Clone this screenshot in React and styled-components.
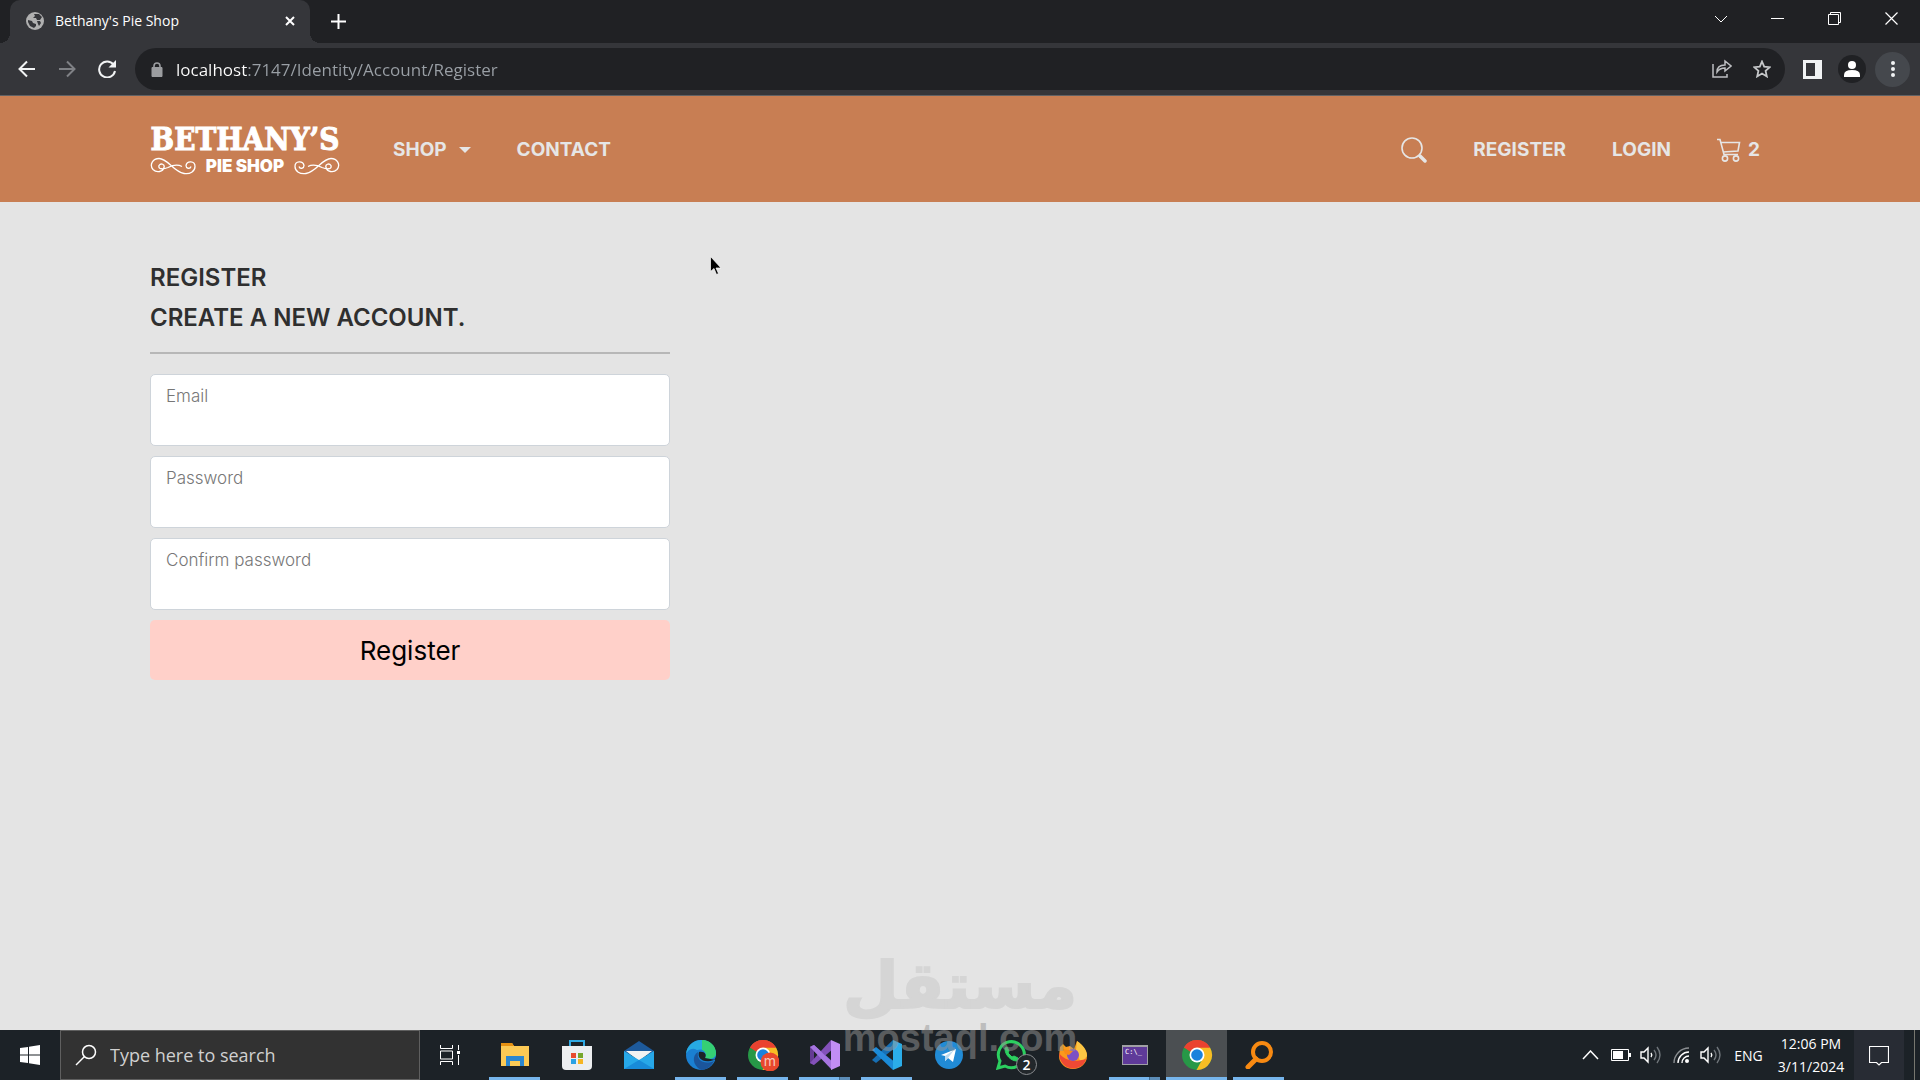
import React from 'react';
import styled, { createGlobalStyle } from 'styled-components';

const ui = `"Open Sans", "Noto Sans", sans-serif`;
const brand = `Inter, "Liberation Sans", sans-serif`;

const GlobalStyle = createGlobalStyle`
  *, *::before, *::after { box-sizing: border-box; }
  body { margin: 0; background: #e4e4e4; }
  button, input { font: inherit; color: inherit; border: 0; padding: 0; margin: 0; background: none; outline: 0; }
  button { display: flex; align-items: center; justify-content: center; cursor: default; }
  svg { display: block; flex: none; }
`;

const Screen = styled.div`
  display: flex;
  flex-direction: column;
  min-height: 100vh;
  position: relative;
  overflow: hidden;
  font-family: ${ui};
`;

/* Browser */
const TabStrip = styled.div`
  display: flex;
  align-items: stretch;
  height: 43px;
  padding-left: 10px;
  background: #202124;
  color: #fff;
`;
const Tab = styled.div`
  position: relative;
  display: flex;
  align-items: center;
  gap: 11px;
  width: 300px;
  padding: 0 10px 2px 16px;
  border-radius: 10px 10px 0 0;
  background: #35363a;
  font-size: 14px;
  &::before, &::after {
    content: "";
    position: absolute;
    bottom: 0;
    width: 10px;
    height: 10px;
  }
  &::before { right: 100%; background: radial-gradient(circle at 0 0, transparent 10px, #35363a 10px); }
  &::after { left: 100%; background: radial-gradient(circle at 100% 0, transparent 10px, #35363a 10px); }
`;
const TabTitle = styled.span`flex: 1; line-height: 20px;`;
const TabButton = styled.button`width: 20px; height: 20px;`;
const NewTab = styled.button`width: 36px; margin: 0 auto 0 10px; padding-bottom: 1px;`;
const WindowButton = styled.button`width: 57px; padding-bottom: 6px;`;

const Toolbar = styled.div`
  display: flex;
  align-items: center;
  height: 53px;
  padding: 0 10px 0 7px;
  background: #35363a;
  border-bottom: 1px solid #606164;
  color: #f1f3f4;
`;
const ToolButton = styled.button`width: 40px; height: 40px;`;
const MenuButton = styled.button`width: 35px; height: 35px; border-radius: 50%; background: #45484d; margin-left: 3px;`;
const AddressBar = styled.div`
  display: flex;
  align-items: center;
  flex: 1;
  height: 42px;
  margin: 0 7px 0 8px;
  padding: 0 3px 0 15px;
  gap: 12px;
  border-radius: 21px;
  background: #202124;
`;
const Address = styled.input`
  flex: 1;
  min-width: 0;
  height: 28px;
  font-size: 17px;
  color: #9aa0a6;
  background: linear-gradient(90deg, #fff ${p => p.$host}px, #9aa0a6 ${p => p.$host}px);
  background-clip: text;
  -webkit-text-fill-color: transparent;
`;
const AddressIcons = styled.div`display: flex;`;

/* Site */
const Nav = styled.nav`
  background: #c87e53;
  color: #e6e6e6;
  font-family: ${brand};
  font-size: 19px;
  font-weight: 700;
  line-height: 30px;
`;
const Container = styled.div`
  max-width: 1650px;
  margin: 0 auto;
  padding: 0 15px;
`;
const NavRow = styled(Container)`
  display: flex;
  align-items: center;
  height: 106px;
`;
const Logo = styled.a`
  display: flex;
  flex-direction: column;
  align-items: center;
  width: 190px;
  margin-right: 30px;
  color: #fff;
  text-decoration: none;
`;
const LogoName = styled.span`
  font: bold 31px/34px "DejaVu Serif Condensed", "DejaVu Serif", serif;
  font-stretch: condensed;
  white-space: nowrap;
  -webkit-text-stroke: 1px #fff;
`;
const LogoSub = styled.span`
  display: flex;
  align-items: center;
  justify-content: space-between;
  width: 100%;
  font: 900 17px/20px ${brand};
`;
const NavLink = styled.a`
  display: flex;
  align-items: center;
  gap: ${p => p.$gap || 0}px;
  padding: 2px 23px 0;
  color: inherit;
  text-decoration: none;
`;
const NavEnd = styled.div`display: flex; margin-left: auto; margin-right: -13px;`;

const Main = styled.main`
  flex: 1;
  padding-top: 56px;
  font-family: ${brand};
  color: #2f2f2f;
`;
const FormColumn = styled.form`width: 33%; max-width: 520px; min-width: 300px;`;
const Heading = styled.h1`
  margin: 0;
  font-size: 24px;
  font-weight: 600;
  line-height: 40px;
`;
const Rule = styled.hr`
  height: 2px;
  margin: 14px 0 20px;
  border: 0;
  background: #b7b7b7;
`;
const Stack = styled.div`display: flex; flex-direction: column; gap: 10px;`;
const Field = styled.div`
  display: flex;
  flex-direction: column;
  height: 72px;
  padding: 9px 15px;
  border: 1px solid #ced4da;
  border-radius: 5px;
  background: #fff;
  label { font-size: 17px; font-weight: 300; line-height: 24px; color: #777; }
  input { flex: 1; min-height: 0; color: #2f2f2f; }
`;
const Submit = styled.button`
  height: 60px;
  border-radius: 5px;
  background: #ffd0c9;
  color: #000;
  font-size: 26px;
`;

/* Overlays */
const Cursor = styled.div`position: absolute; left: 710px; top: 256px;`;
const Watermark = styled.div`
  position: absolute;
  left: 0;
  right: 0;
  bottom: 22px;
  display: flex;
  flex-direction: column;
  align-items: center;
  color: rgba(150, 150, 150, 0.5);
  pointer-events: none;
`;
const WatermarkArabic = styled.span`
  font: bold 64px/64px "DejaVu Sans", sans-serif;
  color: #d5d5d5;
  -webkit-text-stroke: 2px #d5d5d5;
`;
const WatermarkLatin = styled.span`font: bold 38px/40px "Liberation Sans", Arial, sans-serif;`;

/* Taskbar */
const Taskbar = styled.footer`
  display: flex;
  height: 50px;
  background: #1c2227;
  color: #fff;
  font-size: 14px;
`;
const TaskButton = styled.button`width: ${p => p.$w || 60}px; height: 50px;`;
const TaskSearch = styled.label`
  display: flex;
  align-items: center;
  gap: 13px;
  width: 360px;
  padding-left: 14px;
  border: 1px solid #5f5f5f;
  background: #323232;
  input { flex: 1; min-width: 0; font-size: 18px; line-height: 26px; }
  input::placeholder { color: #d0d0d0; opacity: 1; }
`;
const Apps = styled.div`display: flex; margin-left: 4px; gap: 1px;`;
const AppButton = styled.button`
  position: relative;
  width: 61px;
  height: 50px;
  background: ${p => (p.$state === 'active' ? '#4b4f52' : 'none')};
  &::after {
    content: "";
    display: ${p => (p.$state ? 'block' : 'none')};
    position: absolute;
    bottom: 0;
    left: ${p => (p.$state === 'active' ? 0 : 5)}px;
    right: ${p => (p.$state === 'active' ? 0 : 5)}px;
    height: 3px;
    background: ${p => (p.$state === 'many' ? 'linear-gradient(90deg, #76b5ec 40px, #3f6c93 40px, #3f6c93 41px, #5c8db8 41px)' : '#76b5ec')};
  }
`;
const Badge = styled.span`
  position: absolute;
  left: 36px;
  top: 24px;
  width: 21px;
  height: 21px;
  border: 1px solid #8a8d90;
  border-radius: 50%;
  background: #22272b;
  font-size: 14px;
  font-weight: 600;
  line-height: 19px;
  text-align: center;
`;
const Tray = styled.div`display: flex; align-items: center; margin-left: auto;`;
const TrayButton = styled.button`width: ${p => p.$w}px; height: 50px;`;
const Clock = styled.time`width: 78px; margin-right: 4px; line-height: 23px; text-align: center; padding-bottom: 1px;`;
const Notice = styled.button`width: 50px; height: 50px; background: #282c34; margin-right: 10px; padding-top: 1px;`;
const DesktopEdge = styled.span`width: 6px; height: 50px; border-left: 1px solid #77776f;`;

const Svg = ({ w = 20, h = w, box, children, ...rest }) => (
  <svg width={w} height={h} viewBox={box || `0 0 ${w} ${h}`} fill="none" stroke="currentColor" aria-hidden="true" {...rest}>
    {children}
  </svg>
);

const Globe = () => (
  <Svg w={18} stroke="none">
    <circle cx="9" cy="9" r="9" fill="#b0b0b0" />
    <path d="M2 8l4 1 1 2 3 1v2l-2 2-4-2-2-4zM8 2l1 2-2 2h3l1 2h3l2-3-3-3zM11 9h3l1 2-2 3-1-2z" fill="#35363a" />
  </Svg>
);

const Flourish = ({ flip }) => (
  <Svg w={46} h={18} strokeWidth="1.3" transform={flip ? 'scale(-1 1)' : undefined}>
    <path d="M9 8.500c2-3 6-1 5 2-1 4-7 6-11 2-4-5 0-11 6-11 9 0 14 13 25 15 6 1 11-2 11-7 0-6-8-6-9-1 0 3 4 4 5 1M9 8.500c-1 4 4 4 9 2 6-3 10-3 14-1" />
  </Svg>
);

const Speaker = () => (
  <Svg w={21} h={18} strokeWidth="1.400">
    <path d="M1 6h3l4-4v14l-4-4H1z" />
    <path d="M11 7q1.500 2 0 4" />
    <path d="M14 4q4 5 0 10M17 1q6 8 0 16" stroke="#70767b" />
  </Svg>
);

const ChromeMark = ({ badge }) => (
  <Svg w={32} stroke="none">
    <circle cx="16" cy="16" r="15" fill="#279847" />
    <path d="M16 16L3 8.500A15 15 0 0 1 29 8.500z" fill="#ea4230" />
    <path d="M16 8.500h13A15 15 0 0 1 15.500 31L22 19z" fill="#f8bd24" />
    <path d="M3 8.500L10 20l6-6z" fill="#279847" />
    <path d="M3 8.500A15 15 0 0 1 29 8.500H16l-7 4z" fill="#ea4230" />
    <circle cx="16" cy="16" r="7.500" fill="#fff" />
    <circle cx="16" cy="16" r="5.800" fill="#1a82dc" />
    {badge && <circle cx="23" cy="23" r="9.500" fill="#e8482d" />}
    {badge && <text x="23" y="27" fontSize="14" fontFamily="Inter" fill="#f7c9b8" textAnchor="middle">m</text>}
  </Svg>
);

const icons = {
  folder: (
    <Svg w={30} h={26} stroke="none">
      <path d="M1 1h11l2 3h15v20H1z" fill="#fcca55" /><path d="M1 1h11l2 3H1z" fill="#e69112" />
      <path d="M6 14h18v10h-4v-5h-10v5H6z" fill="#2b86cf" />
    </Svg>
  ),
  store: (
    <Svg w={30} h={30} stroke="none">
      <path d="M8 7V1h14v6" stroke="#2fa9e3" strokeWidth="2" /><path d="M0 6h30v20q0 4-4 4H4q-4 0-4-4z" fill="#eceef0" />
      <path d="M9 13h5v5H9z" fill="#e84a2e" /><path d="M16 13h5v5h-5z" fill="#75a62b" /><path d="M9 19h5v5H9z" fill="#2aa2e4" /><path d="M16 19h5v5h-5z" fill="#f6b522" />
    </Svg>
  ),
  mail: (
    <Svg w={30} h={28} stroke="none">
      <path d="M0 10L15 0l15 10v4H0z" fill="#1d5a9b" /><path d="M2 10h26L15 20z" fill="#f2f2f2" />
      <path d="M0 10l15 9 15-9v18H0z" fill="#27a8e8" /><path d="M0 28l15-9 15 9z" fill="#188bd8" />
    </Svg>
  ),
  edge: (
    <Svg w={30} stroke="none">
      <circle cx="15" cy="15" r="15" fill="#1a80d2" />
      <path d="M0 14C2-4 28-5 30 13c0 6-8 7-11 5 3-7-3-10-8-8C6 7 2 10 0 14z" fill="#27aae2" />
      <path d="M16 0c8 0 14 6 14 13 0 6-8 7-11 5 2-4 0-7-3-8z" fill="#35cf74" />
      <path d="M12 12c-2 9 7 13 16 9-3 6-8 9-13 9-9-5-9-15-3-18z" fill="#1b559b" />
      <path d="M13 12c-2 6 4 12 15 8l2-3v3l-11-2c2-3 0-7-6-6z" fill="#1c2227" />
    </Svg>
  ),
  chromeProfile: <ChromeMark badge />,
  visualStudio: (
    <Svg w={30} stroke="none">
      <path d="M0 7l4-2 19 17-3 4z" fill="#9563d2" /><path d="M0 7l4-2v20l-4-2z" fill="#653b94" /><path d="M4 25L0 23 21 0l2 9z" fill="#8351ba" />
      <path d="M0 7l4-2 18 17v8z" fill="#a675e0" /><path d="M21 0l9 4v22l-9 4z" fill="#c28df4" />
    </Svg>
  ),
  code: (
    <Svg w={30} stroke="none">
      <path d="M0 20L21 0l3 7L4 23z" fill="#176fb4" /><path d="M0 10l4-3 20 16-3 7z" fill="#1b8bd8" /><path d="M21 0l9 4v22l-9 4z" fill="#2bade9" />
    </Svg>
  ),
  telegram: (
    <Svg w={28} stroke="none">
      <circle cx="14" cy="14" r="14" fill="#218bd6" /><path d="M6 14l15-6-3 13-5-4-3 3v-5z" fill="#fff" /><path d="M10 15l9-6-6 8-3 3z" fill="#b9daf0" />
    </Svg>
  ),
  whatsapp: (
    <Svg w={30} strokeWidth="3" stroke="#2bd05f">
      <path d="M2 28l2-7a13 13 0 1 1 5 5z" /><path d="M9 9c0 6 6 12 12 12l1-3-4-2-2 1-4-4 1-2-2-4-2 1z" fill="#2bd05f" strokeWidth="1" />
    </Svg>
  ),
  firefox: (
    <Svg w={28} stroke="none">
      <path d="M1 6l3-3 3 3 4-1 4 3 3-8c6 5 10 9 10 15A14 13 0 0 1 0 15z" fill="#fb9a1c" /><path d="M18 0c6 4 10 9 10 15l-6 7-5-12z" fill="#fcc644" />
      <path d="M0 12c5 7 14 10 27 6-3 13-26 14-27-6z" fill="#ee4934" /><circle cx="14" cy="14" r="6" fill="#7c50c4" /><path d="M4 8l10 2-4 4-4-1z" fill="#f98b17" />
    </Svg>
  ),
  terminal: (
    <Svg w={26} h={20} stroke="none">
      <path d="M0 0h26v20H0z" fill="#a0a0a4" /><path d="M1 2h24v17H1z" fill="#5f3a99" />
      <text x="3" y="9" fontSize="7" fontFamily="DejaVu Sans Mono" fill="#fff">C:\_</text>
    </Svg>
  ),
  chrome: <ChromeMark />,
  finder: (
    <Svg w={28} stroke="#f88a12" strokeWidth="4">
      <circle cx="17" cy="11" r="9" /><path d="M11 18l-8 8" strokeWidth="5" strokeLinecap="round" />
    </Svg>
  ),
};

const apps = [
  { id: 'folder', label: 'File Explorer', state: 'open' },
  { id: 'store', label: 'Microsoft Store' },
  { id: 'mail', label: 'Mail' },
  { id: 'edge', label: 'Microsoft Edge', state: 'open' },
  { id: 'chromeProfile', label: 'Chrome profile', state: 'open' },
  { id: 'visualStudio', label: 'Visual Studio', state: 'many' },
  { id: 'code', label: 'Visual Studio Code', state: 'open' },
  { id: 'telegram', label: 'Telegram' },
  { id: 'whatsapp', label: 'WhatsApp', badge: '2' },
  { id: 'firefox', label: 'Firefox' },
  { id: 'terminal', label: 'Command Prompt', state: 'many' },
  { id: 'chrome', label: 'Google Chrome', state: 'active' },
  { id: 'finder', label: 'Search Everything', state: 'open' },
];

const fields = [
  { id: 'email', label: 'Email', type: 'email' },
  { id: 'password', label: 'Password', type: 'password' },
  { id: 'confirm', label: 'Confirm password', type: 'password' },
];

export default function App() {
  return (
    <Screen>
      <GlobalStyle />
      <TabStrip>
        <Tab>
          <Globe />
          <TabTitle>Bethany's Pie Shop</TabTitle>
          <TabButton aria-label="Close tab"><Svg w={10} strokeWidth="2"><path d="M1 1l8 8M9 1L1 9" /></Svg></TabButton>
        </Tab>
        <NewTab aria-label="New tab"><Svg w={15} strokeWidth="2"><path d="M7.500 0v15M0 7.500h15" /></Svg></NewTab>
        <WindowButton aria-label="Search tabs"><Svg w={14} h={8}><path d="M1 1l6 6 6-6" /></Svg></WindowButton>
        <WindowButton aria-label="Minimize"><Svg w={13} h={1}><path d="M0 .5h13" /></Svg></WindowButton>
        <WindowButton aria-label="Restore"><Svg w={13}><path d="M.5 2.500h10v10H.5zM2.500 2.500v-2h10v10h-2" /></Svg></WindowButton>
        <WindowButton aria-label="Close"><Svg w={13} strokeWidth="1.200"><path d="M.5.5l12 12M12.500.5l-12 12" /></Svg></WindowButton>
      </TabStrip>
      <Toolbar>
        <ToolButton aria-label="Back"><Svg w={18} strokeWidth="2"><path d="M17 9H2M9 1.500L1.500 9 9 16.500" /></Svg></ToolButton>
        <ToolButton aria-label="Forward"><Svg w={18} strokeWidth="2" stroke="#7f8185"><path d="M1 9h15M9 1.500L16.500 9 9 16.500" /></Svg></ToolButton>
        <ToolButton aria-label="Reload">
          <Svg w={18} strokeWidth="2"><path d="M15.500 4.500A8 8 0 1 0 17 11" /><path d="M18 0v7.500h-7.500z" fill="currentColor" stroke="none" /></Svg>
        </ToolButton>
        <AddressBar>
          <Svg w={14} h={15} stroke="#9b9da0"><path d="M2 5.500h10v9H2z" fill="#9b9da0" /><path d="M4 6V4a3 3 0 0 1 6 0v2" strokeWidth="1.600" /></Svg>
          <Address aria-label="Address" $host={71} defaultValue="localhost:7147/Identity/Account/Register" />
          <AddressIcons>
            <ToolButton aria-label="Share">
              <Svg w={20} stroke="#bdbfc2" strokeWidth="1.500"><path d="M1 5v13h14v-3M5 13c0-5 3-7 8-7V2l6 5-6 5V9c-4 0-6 1-8 4z" /></Svg>
            </ToolButton>
            <ToolButton aria-label="Bookmark">
              <Svg w={18} stroke="#c6c8ca" strokeWidth="1.800"><path d="M9 1.500l2.200 5.200 5.600.5-4.200 3.700 1.200 5.500L9 13.500l-4.800 2.900 1.200-5.500L1.200 7.200l5.600-.5z" /></Svg>
            </ToolButton>
          </AddressIcons>
        </AddressBar>
        <ToolButton aria-label="Side panel"><Svg w={19} stroke="none"><path fillRule="evenodd" d="M0 0h19v19H0zM3 3v13h9V3z" fill="#f1f3f4" /></Svg></ToolButton>
        <ToolButton aria-label="Profile">
          <Svg w={28} stroke="none"><circle cx="14" cy="14" r="14" fill="#202124" /><circle cx="14" cy="10" r="4" fill="#fff" /><path d="M6 22v-2q0-5 8-5t8 5v2z" fill="#fff" /></Svg>
        </ToolButton>
        <MenuButton aria-label="Menu">
          <Svg w={4} h={16} stroke="none" fill="#f1f3f4"><circle cx="2" cy="2" r="2" /><circle cx="2" cy="8" r="2" /><circle cx="2" cy="14" r="2" /></Svg>
        </MenuButton>
      </Toolbar>

      <Nav>
        <NavRow>
          <Logo href="#">
            <LogoName>BETHANY’S</LogoName>
            <LogoSub><Flourish />PIE SHOP<Flourish flip /></LogoSub>
          </Logo>
          <NavLink href="#" $gap={12}>SHOP<Svg w={12} h={6} stroke="none"><path d="M0 0h12L6 6z" fill="currentColor" /></Svg></NavLink>
          <NavLink href="#">CONTACT</NavLink>
          <NavEnd>
            <NavLink href="#" aria-label="Search">
              <Svg w={26} strokeWidth="1.600"><circle cx="11" cy="11" r="10" /><path d="M18 18l1 1" /><path d="M19 19l5 5" strokeWidth="3.500" strokeLinecap="round" /></Svg>
            </NavLink>
            <NavLink href="#">REGISTER</NavLink>
            <NavLink href="#">LOGIN</NavLink>
            <NavLink href="#" $gap={7}>
              <Svg w={24} h={24} strokeWidth="1.600"><path d="M0 1.500h3l4 15h14M4 4.500h18.500l-1.500 8.500-15 1" /><circle cx="8" cy="20.500" r="2.600" /><circle cx="19" cy="20.500" r="2.600" /></Svg>
              2
            </NavLink>
          </NavEnd>
        </NavRow>
      </Nav>

      <Main>
        <Container>
          <FormColumn onSubmit={e => e.preventDefault()}>
            <Heading>REGISTER</Heading>
            <Heading as="h2">CREATE A NEW ACCOUNT.</Heading>
            <Rule />
            <Stack>
              {fields.map(f => (
                <Field key={f.id}>
                  <label htmlFor={f.id}>{f.label}</label>
                  <input id={f.id} type={f.type} />
                </Field>
              ))}
              <Submit type="submit">Register</Submit>
            </Stack>
          </FormColumn>
        </Container>
      </Main>

      <Taskbar>
        <TaskButton aria-label="Start">
          <Svg w={20} stroke="none" fill="#fff"><path d="M0 3l8-1v7.500H0zM9 1.800L20 0v9.500H9zM0 10.500h8V18l-8-1zM9 10.500h11V20L9 18.200z" /></Svg>
        </TaskButton>
        <TaskSearch>
          <Svg w={22} strokeWidth="1.500"><circle cx="14" cy="8" r="6.500" /><path d="M9.500 12.500L1 21" /></Svg>
          <input aria-label="Search" placeholder="Type here to search" />
        </TaskSearch>
        <TaskButton aria-label="Task view">
          <Svg w={20}><path d="M.5 0v3.500h12V0M.5 6h12v8H.5zM.5 20v-3.500h12V20M18.500 0v5M18.500 10v10" /><path d="M17 6h3v3h-3z" fill="#fff" stroke="none" /></Svg>
        </TaskButton>
        <Apps>
          {apps.map(a => (
            <AppButton key={a.id} $state={a.state} aria-label={a.label}>
              {icons[a.id]}
              {a.badge && <Badge>{a.badge}</Badge>}
            </AppButton>
          ))}
        </Apps>
        <Tray>
          <TrayButton $w={34} aria-label="Hidden icons"><Svg w={17} h={10} strokeWidth="1.500"><path d="M1 9l7.500-8L16 9" /></Svg></TrayButton>
          <TrayButton $w={28} aria-label="Battery"><Svg w={20} h={12}><path d="M.5.5h17v11H.5z" /><path d="M2 2h10v8H2zM18 4h2v4h-2z" fill="#fff" stroke="none" /></Svg></TrayButton>
          <TrayButton $w={31} aria-label="Speakers"><Speaker /></TrayButton>
          <TrayButton $w={30} aria-label="Network">
            <Svg w={16} strokeWidth="1.400"><path d="M1 16A15 15 0 0 1 16 1" stroke="#8b8f92" /><path d="M5 16A11 11 0 0 1 16 5M9 16a7 7 0 0 1 7-7" /><circle cx="14" cy="14" r="2" fill="#fff" stroke="none" /></Svg>
          </TrayButton>
          <TrayButton $w={29} aria-label="Volume"><Speaker /></TrayButton>
          <TrayButton $w={47}>ENG</TrayButton>
          <Clock>12:06 PM<br />3/11/2024</Clock>
          <Notice aria-label="Notifications"><Svg w={20}><path d="M.5.5h19v16h-7L10 19l-2.500-2.500h-7z" strokeWidth="1.200" /></Svg></Notice>
          <DesktopEdge />
        </Tray>
      </Taskbar>

      <Watermark>
        <WatermarkArabic lang="ar">مستقل</WatermarkArabic>
        <WatermarkLatin>mostaql.com</WatermarkLatin>
      </Watermark>
      <Cursor>
        <Svg w={12} h={19} stroke="#fff"><path d="M.5.5v15l3.500-3 2.500 6 2-1-2.500-5.500H11z" fill="#000" strokeWidth=".7" /></Svg>
      </Cursor>
    </Screen>
  );
}
